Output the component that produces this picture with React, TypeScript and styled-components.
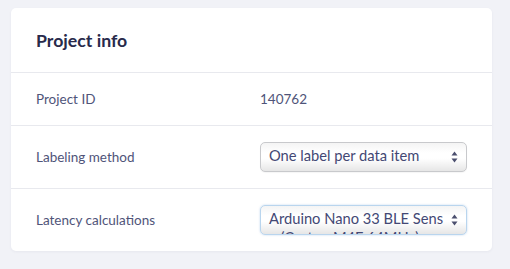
import React from "react";
import styled, { createGlobalStyle } from "styled-components";

const Global = createGlobalStyle`
  html, body {
    margin: 0;
    padding: 0;
    background: #f1f2f7;
    font-family: Lato, "Open Sans", sans-serif;
  }
`;

const Page = styled.div`
  padding: 8px 18px 17px 11px;
`;

const Card = styled.div`
  width: 481px;
  background: #ffffff;
  border-radius: 5px;
  box-shadow: 0 1px 3px rgba(40, 44, 80, 0.05);
`;

const Header = styled.div`
  height: 64px;
  padding: 0 25px;
  display: flex;
  align-items: center;
  border-bottom: 1px solid #e8e9ee;
  font-size: 17.7px;
  font-weight: 700;
  color: #282a4b;
`;

const Row = styled.div<{ $last?: boolean; $pad: number }>`
  display: grid;
  grid-template-columns: 224px 207px;
  align-items: center;
  padding: ${(p) => p.$pad}px 25px;
  border-bottom: ${(p) => (p.$last ? "none" : "1px solid #e8e9ee")};
`;

const Label = styled.div`
  font-size: 13.5px;
  color: #4f5479;
`;

const Value = styled.div`
  font-size: 13.5px;
  color: #4f5479;
`;

const SelectBox = styled.div<{ $focused?: boolean }>`
  position: relative;
  height: 30px;
  box-sizing: border-box;
  border-radius: 5px;
  border: 1px solid ${(p) => (p.$focused ? "#b9d5ee" : "#c8c9cc")};
  background: linear-gradient(#f4f4f4, #ffffff 35%, #ffffff 55%, #e6e6e6);
  box-shadow: ${(p) =>
    p.$focused ? "0 0 2px rgba(120, 170, 220, 0.5)" : "0 1px 1px rgba(0,0,0,0.04)"};
  overflow: hidden;
`;

const SelectText = styled.div`
  padding: 3px 19px 0 8px;
  font-size: 14.7px;
  line-height: 19px;
  color: #434874;
  word-break: break-all;
`;

const Arrows = styled.svg`
  position: absolute;
  right: 8px;
  top: 50%;
  margin-top: -6px;
`;

function Select({ text, focused }: { text: string; focused?: boolean }) {
  return (
    <SelectBox $focused={focused}>
      <SelectText>{text}</SelectText>
      <Arrows width="7" height="12" viewBox="0 0 7 12">
        <path d="M3.5 0.5 L6.5 4.5 L0.5 4.5 Z" fill="#4b4f6e" />
        <path d="M3.5 11.5 L6.5 7.5 L0.5 7.5 Z" fill="#4b4f6e" />
      </Arrows>
    </SelectBox>
  );
}

export default function App() {
  return (
    <Page>
      <Global />
      <Card>
        <Header>Project info</Header>
        <Row $pad={18}>
          <Label>Project ID</Label>
          <Value>140762</Value>
        </Row>
        <Row $pad={16}>
          <Label>Labeling method</Label>
          <Select text="One label per data item" />
        </Row>
        <Row $pad={16} $last>
          <Label>Latency calculations</Label>
          <Select focused text="Arduino Nano 33 BLE Sense (Cortex-M4F 64MHz)" />
        </Row>
      </Card>
    </Page>
  );
}
